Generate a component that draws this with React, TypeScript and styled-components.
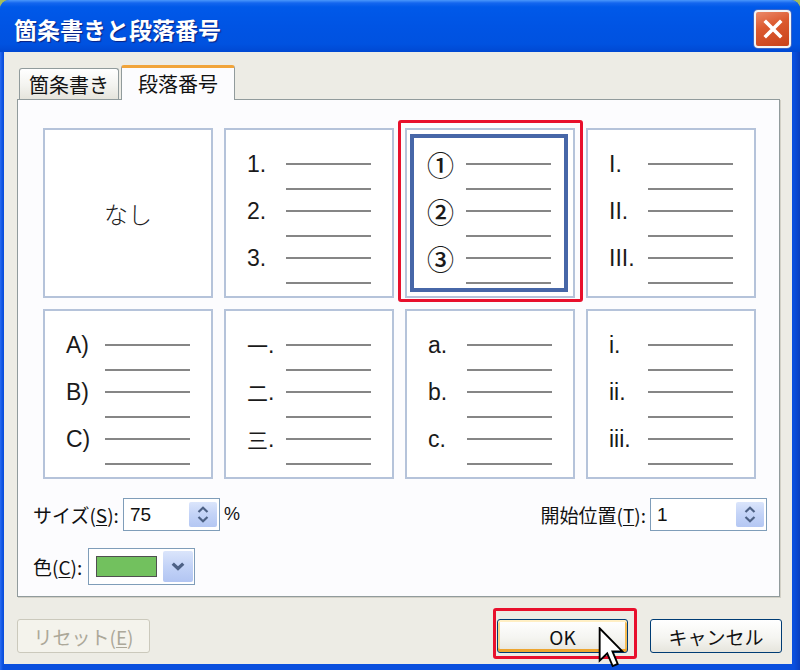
import React from 'react';
import styled, { createGlobalStyle, css } from 'styled-components';

const UI_FONT = `"Noto Sans CJK JP", "Liberation Sans", sans-serif`;
const NUM_FONT = `"Liberation Sans", "Noto Sans CJK JP", sans-serif`;

const GlobalStyle = createGlobalStyle`
  html, body { margin: 0; padding: 0; background: #a4bd5c; }
  * { box-sizing: border-box; }
  body { font-family: ${UI_FONT}; }
`;

const Window = styled.div`
  width: 800px;
  height: 670px;
  display: flex;
  flex-direction: column;
  background: linear-gradient(to right, #2a6cf0 0, #0a4fde 3px, #0a4fde 794px, #0a3fbf 800px);
  border-radius: 9px 9px 0 0;
  overflow: hidden;
`;

const TitleBar = styled.div`
  height: 52px;
  flex: none;
  display: flex;
  align-items: center;
  justify-content: space-between;
  padding: 5px 9px 0 14px;
  background: linear-gradient(
    180deg,
    #4a97fb 0px,
    #1466ef 3px,
    #0059e9 7px,
    #0054e4 26px,
    #0052e0 44px,
    #0048d2 52px
  );
`;

const Title = styled.div`
  font-family: ${UI_FONT};
  font-weight: 700;
  font-size: 23px;
  color: #ffffff;
  text-shadow: 1px 1px 1px #0a2180;
`;

const CloseButton = styled.div`
  width: 37px;
  height: 38px;
  border: 2px solid #f4f4f4;
  border-radius: 4px;
  background: linear-gradient(160deg, #eb8a6a 0%, #dc5a30 40%, #c9421a 100%);
  display: flex;
  align-items: center;
  justify-content: center;
  box-shadow: 0 0 0 1px #3a66c8;
`;

const Client = styled.div`
  flex: 1;
  margin: 0 8px 6px 4px;
  background: #edece5;
  padding: 13px 12px 0 13px;
  display: flex;
  flex-direction: column;
`;

const TabRow = styled.div`
  display: flex;
  align-items: flex-end;
  height: 34px;
  padding-left: 2px;
  gap: 2px;
  position: relative;
  z-index: 1;
`;

const Tab = styled.div<{ $active?: boolean; $w: number }>`
  width: ${(p) => p.$w}px;
  height: ${(p) => (p.$active ? 35 : 31)}px;
  margin-bottom: ${(p) => (p.$active ? -1 : 0)}px;
  display: flex;
  align-items: center;
  justify-content: center;
  font-family: ${UI_FONT};
  font-size: 20px;
  color: #111;
  border: 1px solid #919b9c;
  border-bottom: none;
  border-radius: 3px 3px 0 0;
  background: linear-gradient(180deg, #ffffff 0%, #f3f3ef 55%, #e5e4dc 100%);
  ${(p) =>
    p.$active &&
    css`
      background: #fcfcfe;
      border-top: 3px solid #f1a43a;
      padding-bottom: 1px;
    `}
`;

const Panel = styled.div`
  height: 498px;
  flex: none;
  border: 1px solid #919b9c;
  background: #fcfcfe;
  padding: 28px 12px 0 15px;
  display: flex;
  flex-direction: column;
  box-shadow: 1px 1px 0 #d2d0c6;
`;

const Grid = styled.div`
  display: grid;
  grid-template-columns: repeat(4, 170px);
  grid-auto-rows: 170px;
  gap: 11px;
  margin-left: 10px;
`;

const Cell = styled.div<{ $empty?: boolean }>`
  position: relative;
  background: #ffffff;
  border: 2px solid #b5c3da;
  padding: 24px 0 0 21px;
  ${(p) =>
    p.$empty &&
    css`
      padding: 0;
      display: flex;
      align-items: center;
      justify-content: center;
    `}
`;

const NoneText = styled.span`
  font-family: ${UI_FONT};
  font-size: 24px;
  font-weight: 300;
  color: #222;
`;

const SelectRing = styled.div`
  position: absolute;
  top: 4px;
  left: 3px;
  right: 5px;
  bottom: 4px;
  border: 4px solid #4767a8;
  pointer-events: none;
`;

const RedMark = styled.div<{ $t: number; $l: number; $r: number; $b: number }>`
  position: absolute;
  top: ${(p) => p.$t}px;
  left: ${(p) => p.$l}px;
  right: ${(p) => p.$r}px;
  bottom: ${(p) => p.$b}px;
  border: 3px solid #e8102c;
  border-radius: 3px;
  pointer-events: none;
`;

const Item = styled.div`
  display: flex;
  height: 47px;
`;

const Marker = styled.div<{ $font: 'num' | 'kanji' | 'circle' }>`
  width: 39px;
  height: 20px;
  display: flex;
  align-items: center;
  font-family: ${(p) => (p.$font === 'num' ? NUM_FONT : UI_FONT)};
  font-size: ${(p) => (p.$font === 'circle' ? 27 : p.$font === 'kanji' ? 21 : 23)}px;
  font-weight: ${(p) => (p.$font === 'circle' ? 500 : 400)};
  margin-left: ${(p) => (p.$font === 'circle' ? -1 : 0)}px;
  color: #1a1a1a;
  white-space: nowrap;
`;

const Dot = styled.span`
  font-family: ${NUM_FONT};
  font-size: 23px;
`;

const Lines = styled.div`
  display: flex;
  flex-direction: column;
  padding-top: 9px;
  gap: 23px;
  width: 85px;
`;

const Line = styled.div`
  height: 2px;
  background: #868686;
`;

const ControlRow = styled.div<{ $mt: number }>`
  display: flex;
  align-items: center;
  justify-content: space-between;
  margin-top: ${(p) => p.$mt}px;
`;

const Field = styled.div`
  display: flex;
  align-items: center;
  gap: 4px;
`;

const Label = styled.span`
  font-family: ${UI_FONT};
  font-size: 19px;
  color: #111;
  white-space: nowrap;
`;

const Key = styled.span`
  text-decoration: underline;
  text-underline-offset: 2px;
`;

const SpinBox = styled.div<{ $w: number }>`
  width: ${(p) => p.$w}px;
  height: 33px;
  border: 1px solid #7f9db9;
  background: #ffffff;
  display: flex;
  align-items: center;
  padding: 3px 2px 3px 6px;
`;

const SpinValue = styled.span`
  flex: 1;
  font-family: ${NUM_FONT};
  font-size: 19px;
  color: #111;
`;

const SpinButton = styled.div`
  width: 28px;
  height: 100%;
  border-radius: 2px;
  background: linear-gradient(180deg, #dbe5fb 0%, #c3d3f7 50%, #b4c7f3 100%);
  display: flex;
  flex-direction: column;
  align-items: center;
  justify-content: center;
  gap: 3px;
`;

const Percent = styled.span`
  font-family: ${NUM_FONT};
  font-size: 18px;
  color: #111;
`;

const ColorCombo = styled.div`
  width: 107px;
  height: 37px;
  border: 1px solid #7f9db9;
  background: #ffffff;
  display: flex;
  align-items: center;
  padding: 2px 1px 2px 7px;
  margin-left: 2px;
`;

const Swatch = styled.div`
  width: 61px;
  height: 21px;
  background: #72c15e;
  border: 1px solid #505050;
`;

const DropButton = styled.div`
  width: 30px;
  height: 100%;
  margin-left: auto;
  border-radius: 2px;
  background: linear-gradient(180deg, #dbe5fb 0%, #c3d3f7 50%, #b2c5f2 100%);
  display: flex;
  align-items: center;
  justify-content: center;
`;

const ButtonRow = styled.div`
  display: flex;
  justify-content: space-between;
  align-items: center;
  margin-top: 22px;
  margin-right: -2px;
`;

const RightButtons = styled.div`
  display: flex;
  gap: 22px;
`;

const Anchor = styled.div`
  position: relative;
`;

const Button = styled.div<{ $w: number; $disabled?: boolean; $hot?: boolean }>`
  width: ${(p) => p.$w}px;
  height: 34px;
  border: 1px solid #003c74;
  border-radius: 3px;
  background: linear-gradient(180deg, #ffffff 0%, #f5f5f1 55%, #e6e5dd 100%);
  display: flex;
  align-items: center;
  justify-content: center;
  font-family: ${UI_FONT};
  font-size: 19px;
  color: #111;
  ${(p) =>
    p.$disabled &&
    css`
      border-color: #cbc9bc;
      background: #f4f3ec;
      color: #aca899;
    `}
  ${(p) =>
    p.$hot &&
    css`
      box-shadow: inset 0 2px 0 #ffefc4, inset 0 -3px 0 #eda530, inset 2px 0 0 #fcd48a,
        inset -2px 0 0 #f5bd55;
    `}
`;

const Cursor = styled.svg`
  position: absolute;
  left: 101px;
  top: 8px;
  pointer-events: none;
  z-index: 3;
`;

const Up = () => (
  <svg width="12" height="7" viewBox="0 0 12 7">
    <path d="M1.5 6 L6 1.8 L10.5 6" fill="none" stroke="#4d6185" strokeWidth="2.2" />
  </svg>
);
const Down = ({ w = 12, h = 7, sw = 2.2 }: { w?: number; h?: number; sw?: number }) => (
  <svg width={w} height={h} viewBox="0 0 12 7">
    <path d="M1.5 1 L6 5.2 L10.5 1" fill="none" stroke="#4d6185" strokeWidth={sw} />
  </svg>
);

type MarkerFont = 'num' | 'kanji' | 'circle';
type CellDef = { markers?: string[]; font?: MarkerFont; selected?: boolean; none?: boolean };

const cells: CellDef[] = [
  { none: true },
  { markers: ['1.', '2.', '3.'], font: 'num' },
  { markers: ['①', '②', '③'], font: 'circle', selected: true },
  { markers: ['I.', 'II.', 'III.'], font: 'num' },
  { markers: ['A)', 'B)', 'C)'], font: 'num' },
  { markers: ['一', '二', '三'], font: 'kanji' },
  { markers: ['a.', 'b.', 'c.'], font: 'num' },
  { markers: ['i.', 'ii.', 'iii.'], font: 'num' },
];

const NumberCell = ({ def }: { def: CellDef }) => {
  if (def.none) {
    return (
      <Cell $empty>
        <NoneText>なし</NoneText>
      </Cell>
    );
  }
  const font = def.font ?? 'num';
  return (
    <Cell>
      {def.markers!.map((m) => (
        <Item key={m}>
          <Marker $font={font}>
            {m}
            {font === 'kanji' && <Dot>.</Dot>}
          </Marker>
          <Lines>
            <Line />
            <Line />
          </Lines>
        </Item>
      ))}
      {def.selected && (
        <>
          <SelectRing />
          <RedMark $t={-10} $l={-9} $r={-10} $b={-6} />
        </>
      )}
    </Cell>
  );
};

export default function App() {
  return (
    <>
      <GlobalStyle />
      <Window>
        <TitleBar>
          <Title>箇条書きと段落番号</Title>
          <CloseButton>
            <svg width="20" height="20" viewBox="0 0 20 20">
              <path d="M3 3 L17 17 M17 3 L3 17" stroke="#ffffff" strokeWidth="3.6" strokeLinecap="square" />
            </svg>
          </CloseButton>
        </TitleBar>
        <Client>
          <TabRow>
            <Tab $w={100}>箇条書き</Tab>
            <Tab $w={114} $active>
              段落番号
            </Tab>
          </TabRow>
          <Panel>
            <Grid>
              {cells.map((c, i) => (
                <NumberCell key={i} def={c} />
              ))}
            </Grid>
            <ControlRow $mt={19}>
              <Field>
                <Label>
                  サイズ(<Key>S</Key>):
                </Label>
                <SpinBox $w={97}>
                  <SpinValue>75</SpinValue>
                  <SpinButton>
                    <Up />
                    <Down />
                  </SpinButton>
                </SpinBox>
                <Percent>%</Percent>
              </Field>
              <Field>
                <Label>
                  開始位置(<Key>T</Key>):
                </Label>
                <SpinBox $w={117}>
                  <SpinValue>1</SpinValue>
                  <SpinButton>
                    <Up />
                    <Down />
                  </SpinButton>
                </SpinBox>
              </Field>
            </ControlRow>
            <ControlRow $mt={17}>
              <Field>
                <Label>
                  色(<Key>C</Key>):
                </Label>
                <ColorCombo>
                  <Swatch />
                  <DropButton>
                    <Down w={14} h={9} sw={2.8} />
                  </DropButton>
                </ColorCombo>
              </Field>
            </ControlRow>
          </Panel>
          <ButtonRow>
            <Button $w={133} $disabled>
              リセット(<Key>E</Key>)
            </Button>
            <RightButtons>
              <Anchor>
                <Button $w={131} $hot>
                  OK
                </Button>
                <RedMark $t={-11} $l={-4} $r={-9} $b={-6} />
                <Cursor width="26" height="42" viewBox="0 0 12 20">
                  <path
                    d="M0.6 0.6 L0.6 16 L4.2 12.6 L6.8 18.6 L9.2 17.6 L6.7 11.6 L11.4 11.6 Z"
                    fill="#ffffff"
                    stroke="#000000"
                    strokeWidth="0.9"
                    strokeLinejoin="miter"
                  />
                </Cursor>
              </Anchor>
              <Button $w={132}>キャンセル</Button>
            </RightButtons>
          </ButtonRow>
        </Client>
      </Window>
    </>
  );
}
